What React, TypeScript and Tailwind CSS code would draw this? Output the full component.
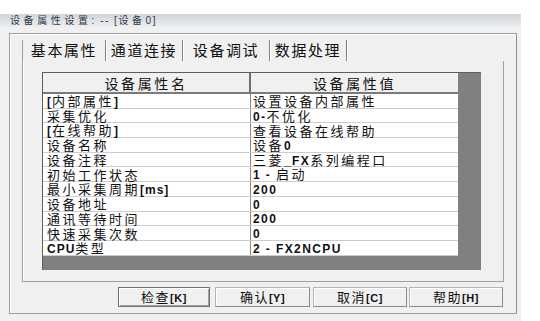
import React from "react";

const cn = "font-['Noto_Sans_CJK_SC','Liberation_Sans',sans-serif]";
const en = "font-['Liberation_Sans',sans-serif] font-bold";

// splits a label into CJK runs and ASCII runs (ASCII shows bold in the dialog font)
function Label({ text, cnCls, enCls }: { text: string; cnCls: string; enCls: string }) {
  const parts = text.split(/([\x20-\x7e]+)/).filter(Boolean);
  return (
    <span className={`${cn} leading-none whitespace-nowrap`}>
      {parts.map((p, i) =>
        /^[\x20-\x7e]+$/.test(p) ? (
          <span key={i} className={`${en} ${enCls} leading-none whitespace-pre`}>{p}</span>
        ) : (
          <span key={i} className={`${cnCls} leading-none`}>{p}</span>
        )
      )}
    </span>
  );
}

const rows: [string, string][] = [
  ["[内部属性]", "设置设备内部属性"],
  ["采集优化", "0-不优化"],
  ["[在线帮助]", "查看设备在线帮助"],
  ["设备名称", "设备0"],
  ["设备注释", "三菱_FX系列编程口"],
  ["初始工作状态", "1 - 启动"],
  ["最小采集周期[ms]", "200"],
  ["设备地址", "0"],
  ["通讯等待时间", "200"],
  ["快速采集次数", "0"],
  ["CPU类型", "2 - FX2NCPU"],
];

const tabs = [
  { label: "基本属性", w: "w-[83px]" },
  { label: "通道连接", w: "w-[77px]" },
  { label: "设备调试", w: "w-[87px]" },
  { label: "数据处理", w: "w-[77px]" },
];

const buttons = [
  { label: "检查[K]", cls: "w-[92px] border-[#707070] shadow-[inset_1px_1px_0_#fff,inset_-1px_-1px_0_#a0a0a0]" },
  { label: "确认[Y]", cls: "ml-[5px] w-[95px] border-[#b4b4b4] border-r-[#8a8a8a] border-b-[#8a8a8a] shadow-[inset_1px_1px_0_#fff]" },
  { label: "取消[C]", cls: "ml-[3px] w-[94px] border-[#b4b4b4] border-r-[#8a8a8a] border-b-[#8a8a8a] shadow-[inset_1px_1px_0_#fff]" },
  { label: "帮助[H]", cls: "ml-[2px] w-[94px] border-[#b4b4b4] border-r-[#8a8a8a] border-b-[#8a8a8a] shadow-[inset_1px_1px_0_#fff]" },
];

export default function App() {
  return (
    <div className="w-[540px] h-[321px] bg-white overflow-hidden">
      <div className="h-[14px]" />
      <div className="w-[521px] h-[307px] bg-[#f0f0f0]">
        {/* title bar */}
        <div className="h-[13px] bg-gradient-to-b from-[#d2d6da] to-[#eceeef] pl-[10px] flex items-center text-[10px] text-[#2f3848]">
          <Label text="设备属性设置: -- [设备0]" cnCls="tracking-[3.6px]" enCls="font-normal tracking-[1.5px] text-[10px]" />
        </div>

        {/* dialog frame */}
        <div className="ml-[9px] mt-[6px] w-[508px] h-[281px] border border-[#a0a0a0] border-r-[#8c8c8c] shadow-[inset_1px_1px_0_#fff] px-[12px] pt-[6px]">
          {/* tab page */}
          <div className="w-[482px] border-l border-[#a0a0a0]">
            <div className="flex h-[21px]">
              {tabs.map((t) => (
                <div
                  key={t.label}
                  className={`${t.w} flex items-center justify-center border-r border-[#808080] shadow-[1px_0_0_#fff] text-[15px] text-[#111] pb-[2px]`}
                >
                  <span className={`${cn} leading-none tracking-[1.6px]`}>{t.label}</span>
                </div>
              ))}
            </div>
            <div className="h-[221px] border-r border-b border-[#a0a0a0] shadow-[inset_1px_0_0_#fff] pl-[19px] pt-[11px]">
              {/* grid */}
              <div className="w-[439px] h-[198px] bg-[#808080] border-t border-l border-[#5e5e5e]">
                <div className="w-[415px] bg-white">
                  <div className="flex h-[21px] bg-[#f0f0f0] border-b-2 border-[#7a7a7a] text-[14px] text-[#111]">
                    <div className="w-[208px] flex items-center justify-center border-r-2 border-[#6e6e6e]">
                      <span className={`${cn} leading-none tracking-[2.6px]`}>设备属性名</span>
                    </div>
                    <div className="flex-1 flex items-center justify-center">
                      <span className={`${cn} leading-none tracking-[2.6px]`}>设备属性值</span>
                    </div>
                  </div>
                  {rows.map(([k, v]) => (
                    <div key={k} className="flex h-[14.7px] border-b border-[#cdcdcd] text-[13px] text-[#111]">
                      <div className="w-[208px] pl-[4px] border-r border-[#8a8a8a] flex items-center">
                        <Label text={k} cnCls="tracking-[2.5px]" enCls="text-[12px] tracking-[1px]" />
                      </div>
                      <div className="flex-1 pl-[2px] flex items-center">
                        <Label text={v} cnCls="tracking-[2.5px]" enCls="text-[12px] tracking-[1.4px]" />
                      </div>
                    </div>
                  ))}
                </div>
              </div>
            </div>
          </div>

          {/* buttons */}
          <div className="flex mt-[5px] pl-[96px]">
            {buttons.map((b) => (
              <div
                key={b.label}
                className={`${b.cls} h-[20px] border flex items-center justify-center text-[13px] text-[#111]`}
              >
                <Label text={b.label} cnCls="tracking-[1.5px]" enCls="text-[11px] tracking-[0.5px]" />
              </div>
            ))}
          </div>
        </div>
      </div>
    </div>
  );
}
